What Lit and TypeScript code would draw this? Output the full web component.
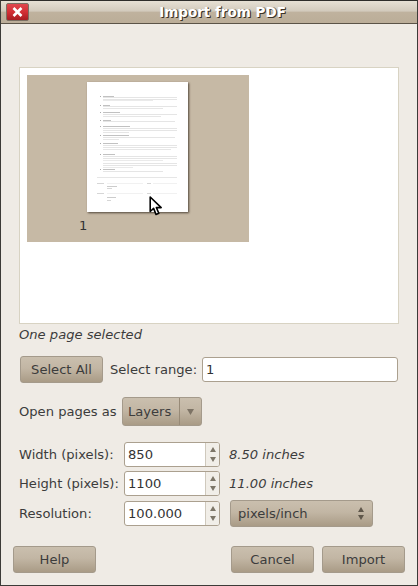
import { LitElement, html, css, svg } from "lit";
import { customElement } from "lit/decorators.js";

// y, x, width, opacity of each blurred line of the miniature document
const lines: [number, number, number, number][] = [
  [14, 13, 1, .4], [14, 16, 11, .3], [15, 16, 74, .13], [17, 16, 74, .13], [18, 16, 50, .1],
  [23, 13, 1, .4], [23, 16, 7, .3], [24, 16, 74, .13], [26, 16, 60, .12],
  [30, 13, 1, .4], [30, 16, 17, .3], [32, 16, 74, .13], [34, 16, 58, .12],
  [38, 13, 1, .4], [38, 16, 8, .3], [39, 16, 72, .13],
  [44, 13, 1, .4], [44, 16, 27, .3], [46, 16, 74, .13], [48, 16, 74, .13], [50, 16, 26, .12],
  [53, 13, 1, .4], [53, 16, 26, .3], [55, 16, 72, .13], [57, 16, 16, .12],
  [61, 13, 1, .4], [61, 16, 15, .3], [63, 16, 74, .13], [65, 16, 74, .13], [67, 16, 68, .12],
  [72, 13, 1, .4], [72, 16, 12, .3], [74, 16, 74, .13], [76, 16, 74, .13], [78, 16, 60, .1],
  [81, 16, 74, .13], [83, 16, 74, .13], [85, 16, 30, .1],
  [87, 13, 1, .4], [87, 16, 12, .3], [89, 16, 60, .13],
  [95, 10, 80, .12],
  [101, 10, 7, .2], [101, 20, 36, .07], [101, 60, 4, .2], [101, 66, 24, .07],
  [104, 20, 10, .25], [106, 20, 5, .2],
  [111, 10, 7, .2], [111, 20, 36, .07], [111, 60, 4, .2], [111, 66, 24, .07],
  [115, 20, 9, .25], [118, 20, 4, .2],
];

@customElement("app-root")
export class AppRoot extends LitElement {
  static styles = css`
    :host { display: block; width: 418px; height: 586px; font-family: "DejaVu Sans", sans-serif; font-size: 13.1px; color: #3c3c3c; }
    * { box-sizing: border-box; }
    .win { width: 418px; height: 586px; display: flex; flex-direction: column; background: #efebe5; border: 1px solid #3c3b37; border-top-color: #2e2d2a; }
    .bar { height: 23px; flex: none; display: flex; align-items: center; justify-content: center; padding-left: 27px; position: relative; background: linear-gradient(#e6e0d4 0, #d3cbbd 45%, #bfb29e 52%, #bbad98 100%); border-bottom: 1px solid #5b5347; }
    .close { position: absolute; left: 5px; top: 2px; width: 23px; height: 18px; border: 1px solid #7b6f62; border-radius: 2px; background: linear-gradient(#e0474d, #d32f35 50%, #a81d22); display: flex; align-items: center; justify-content: center; }
    .title { font-weight: bold; font-size: 13.5px; color: #fff; text-shadow: 1px 1px 0 #3c3226, 1px 0 0 #6a5d4c; }
    .body { flex: 1; display: flex; flex-direction: column; padding: 43px 18px 0 18px; }
    .preview { height: 257px; background: #fff; border: 1px solid #d8d3c3; padding: 7px; flex: none; }
    .thumb { width: 222px; height: 167px; background: #c6b9a5; padding: 7px 0 0 60px; position: relative; }
    .page { display: block; width: 101px; height: 130px; background: #fff; box-shadow: 1px 1px 2px rgba(40,30,20,.75); }
    .num { margin: 6px 0 0 -8px; line-height: 15px; color: #333; }
    .cursor { position: absolute; left: 122px; top: 121px; }
    .cap { font-style: italic; margin-top: 2px; height: 18px; line-height: 18px; }
    .btn, .combo { background: linear-gradient(#cabfae, #c2b6a4 45%, #a99b86); border: 1px solid #a49a8b; border-radius: 3px; color: #3c3c3c; display: flex; align-items: center; justify-content: center; }
    .btn { width: 83px; height: 27px; flex: none; }
    .row1 { display: flex; align-items: center; margin: 12px 0 0 1px; height: 27px; white-space: nowrap; }
    .lab1 { width: 92px; margin-left: 7px; flex: none; }
    .input { background: #fff; border: 1px solid #aba08f; border-radius: 3px; height: 25px; display: flex; align-items: center; padding-left: 3px; color: #333; }
    .wide { width: 196px; }
    .row2 { display: flex; align-items: center; margin-top: 14px; height: 29px; }
    .row2 > span { width: 103px; }
    .layers { width: 80px; height: 29px; padding: 0; justify-content: flex-start; }
    .layers span { width: 57px; padding-left: 5px; }
    .layers .drop { width: 22px; height: 100%; border-left: 1px solid #978a77; display: flex; align-items: center; justify-content: center; }
    .grid { display: grid; grid-template-columns: 105px 96px auto; row-gap: 4px; align-items: center; margin-top: 16px; }
    .spin { display: flex; width: 96px; height: 25px; border: 1px solid #aba08f; border-radius: 3px; overflow: hidden; background: #fff; }
    .spin .val { flex: 1; padding-left: 3px; line-height: 23px; color: #333; }
    .arrows { width: 14px; border-left: 1px solid #cfc9bd; background: #f1eee8; display: flex; flex-direction: column; align-items: center; justify-content: space-around; padding: 2px 0; }
    .updown { display: flex; flex-direction: column; gap: 3px; margin-right: 1px; }
    .it { font-style: italic; margin-left: 9px; }
    .unit { margin-left: 10px; width: 143px; height: 27px; justify-content: space-between; padding: 0 7px; }
    .footer { display: flex; align-items: center; margin: 19px -6px 0 -6px; gap: 8px; }
    .sp { flex: 1; }
  `;

  private tri(up: boolean, w = 6, h = 5, c = "#7d7668") {
    const pts = up ? `0,${h} ${w},${h} ${w / 2},0` : `0,0 ${w},0 ${w / 2},${h}`;
    return html`<svg width=${w} height=${h} viewBox="0 0 ${w} ${h}"><polygon points=${pts} fill=${c}></polygon></svg>`;
  }

  private spin(v: string) {
    return html`<div class="spin"><div class="val">${v}</div><div class="arrows">${this.tri(true)}${this.tri(false)}</div></div>`;
  }

  render() {
    return html`<div class="win">
      <div class="bar">
        <div class="close"><svg width="11" height="10" viewBox="0 0 11 10"><path d="M1.5 1 9.5 9M9.5 1 1.5 9" stroke="#fff" stroke-width="2.6"></path></svg></div>
        <div class="title">Import from PDF</div>
      </div>
      <div class="body">
        <div class="preview">
          <div class="thumb">
            <svg class="page" viewBox="0 0 101 130">${lines.map(([y, x, w, o]) => svg`<rect x=${x} y=${y} width=${w} height="1" fill="#333" opacity=${o}></rect>`)}</svg>
            <div class="num">1</div>
            <svg class="cursor" width="14" height="20" viewBox="0 0 14 20"><path d="M1.2 1V15.5L4.6 12.4 7 18.4 9.8 17.2 7.4 11.6H12.2Z" fill="#fff" stroke="#000" stroke-width="1.6" stroke-linejoin="round"></path></svg>
          </div>
        </div>
        <div class="cap">One page selected</div>
        <div class="row1"><div class="btn">Select All</div><span class="lab1">Select range:</span><div class="input wide">1</div></div>
        <div class="row2"><span>Open pages as</span><div class="combo layers"><span>Layers</span><div class="drop">${this.tri(false, 7, 6, "#7d7365")}</div></div></div>
        <div class="grid">
          <span>Width (pixels):</span>${this.spin("850")}<span class="it">8.50 inches</span>
          <span>Height (pixels):</span>${this.spin("1100")}<span class="it">11.00 inches</span>
          <span>Resolution:</span>${this.spin("100.000")}<div class="combo unit"><span>pixels/inch</span><div class="updown">${this.tri(true, 6, 5, "#5f574b")}${this.tri(false, 6, 5, "#5f574b")}</div></div>
        </div>
        <div class="footer"><div class="btn">Help</div><div class="sp"></div><div class="btn">Cancel</div><div class="btn">Import</div></div>
      </div>
    </div>`;
  }
}
